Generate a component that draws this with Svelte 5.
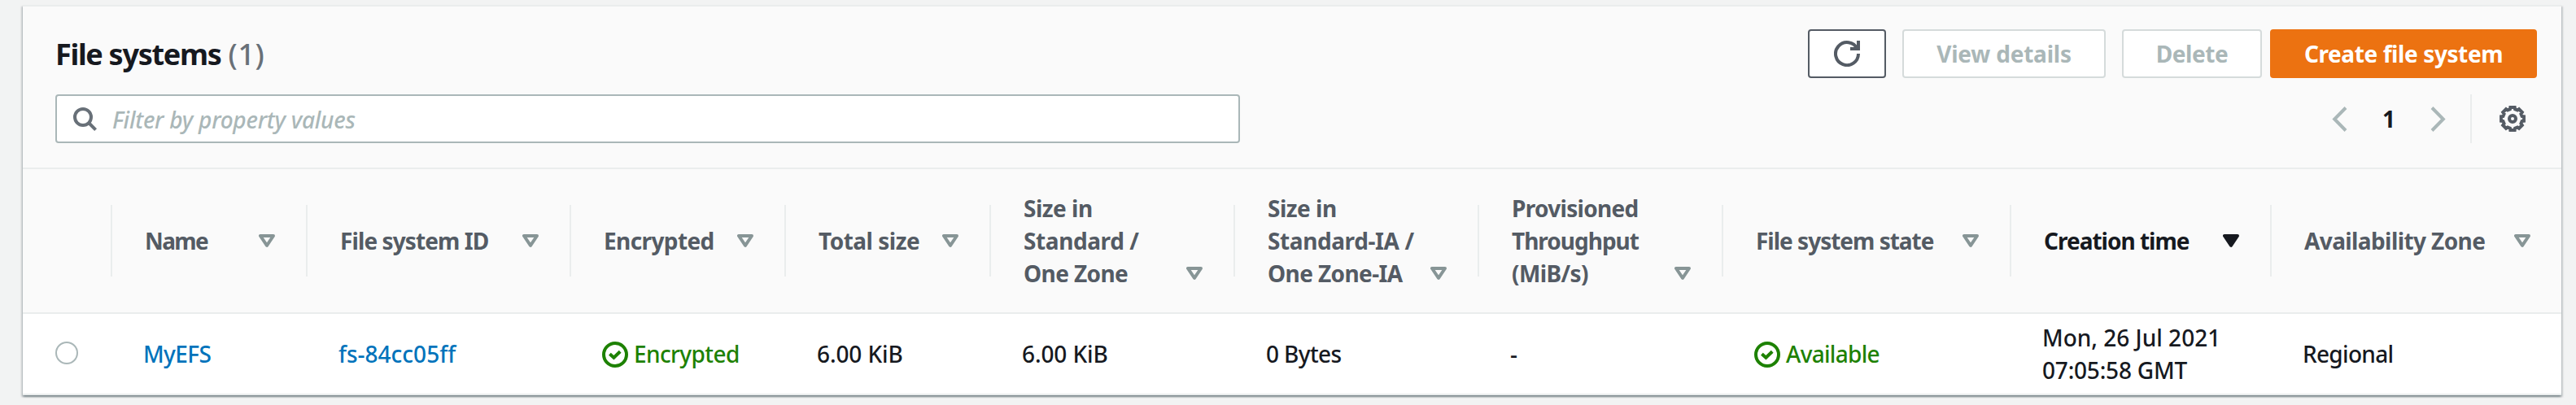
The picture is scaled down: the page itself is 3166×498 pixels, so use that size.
<script>
  const columns = [
    { lines: [['Name', -1.6]] },
    { lines: [['File system ID', -0.9]] },
    { lines: [['Encrypted', -0.6]] },
    { lines: [['Total size', -0.5]] },
    { lines: [['Size in', -0.5], ['Standard /', -0.4], ['One Zone', -0.6]] },
    { lines: [['Size in', -0.5], ['Standard-IA /', -0.4], ['One Zone-IA', -0.6]] },
    { lines: [['Provisioned', -0.7], ['Throughput', -1], ['(MiB/s)', -0.6]] },
    { lines: [['File system state', -1]] },
    { lines: [['Creation time', -1]], sorted: true },
    { lines: [['Availability Zone', -0.6]] }
  ];

  const cells = [
    { kind: 'link', lines: [['MyEFS', -0.6]] },
    { kind: 'link', lines: [['fs-84cc05ff', 0]] },
    { kind: 'status', lines: [['Encrypted', -0.6]] },
    { lines: [['6.00 KiB', -0.1]] },
    { lines: [['6.00 KiB', -0.1]] },
    { lines: [['0 Bytes', -0.6]] },
    { lines: [['-', 0]] },
    { kind: 'status', lines: [['Available', -0.7]] },
    { lines: [['Mon, 26 Jul 2021', 0], ['07:05:58 GMT', -0.2]] },
    { lines: [['Regional', -0.7]] }
  ];

  // Eight-tooth gear outline in a 16-unit box
  const gear = (() => {
    const points = [];
    for (let i = 0; i < 8; i++) {
      const base = i * 45;
      for (const [offset, radius] of [[-11, 7.1], [11, 7.1], [15, 6], [30, 6]]) {
        const a = ((base + offset) * Math.PI) / 180;
        points.push(`${(8 + radius * Math.sin(a)).toFixed(2)} ${(8 - radius * Math.cos(a)).toFixed(2)}`);
      }
    }
    return `M${points.join('L')}Z`;
  })();
</script>

<main>
  <section class="panel">
    <header>
      <div class="title-row">
        <h2>File systems <span>(1)</span></h2>
        <div class="actions">
          <button class="refresh" aria-label="Refresh">
            <svg class="icon" viewBox="0 0 16 16"><path d="M10 5h5V0" /><path d="M15 8a7 7 0 1 1-.7-3" /></svg>
          </button>
          <button class="view" disabled>View details</button>
          <button class="delete" disabled>Delete</button>
          <button class="primary">Create file system</button>
        </div>
      </div>
      <div class="tools">
        <label class="search">
          <svg class="icon" viewBox="0 0 16 16"><circle cx="7" cy="7" r="5" /><path d="M10.5 10.5l4.3 4.3" /></svg>
          <span>Filter by property values</span>
        </label>
        <nav>
          <svg class="chevron" viewBox="0 0 19 31"><path d="M17 1.5 3.2 15.5 17 29.5" /></svg>
          <b>1</b>
          <svg class="chevron" viewBox="0 0 19 31"><path d="M2 1.5 15.8 15.5 2 29.5" /></svg>
          <div class="settings">
            <svg class="icon" viewBox="0 0 16 16"><path d={gear} /><circle cx="8" cy="8" r="2" /></svg>
          </div>
        </nav>
      </div>
    </header>

    <div class="row head">
      <div class="th"></div>
      {#each columns as column}
        <div class="th" class:sorted={column.sorted}>
          <div class="label">
            {#each column.lines as [text, tracking]}
              <span style="letter-spacing: {tracking}px">{text}</span>
            {/each}
          </div>
          <svg class="caret" class:low={column.lines.length > 1} viewBox="0 0 20 16"><path d="M2 2h16l-8 11.8z" /></svg>
        </div>
      {/each}
    </div>

    <div class="row body">
      <div class="select"><i></i></div>
      {#each cells as cell}
        <div class="td {cell.kind ?? ''}">
          {#if cell.kind === 'status'}
            <svg class="icon" viewBox="0 0 16 16"><circle cx="8" cy="8" r="7" /><path d="M4.7 7.6 7.2 9.9 11.1 6.1" /></svg>
          {/if}
          <div class="label">
            {#each cell.lines as [text, tracking]}
              <span style="letter-spacing: {tracking}px">{text}</span>
            {/each}
          </div>
        </div>
      {/each}
    </div>
  </section>
</main>

<style>
  :global(body) {
    background: #f2f3f3;
  }
  main {
    box-sizing: border-box;
    height: 498px;
    padding: 6px 18px 12px 28px;
    background: #f2f3f3;
  }
  .panel {
    box-sizing: border-box;
    height: 480px;
    border-top: 2px solid #eaeded;
    background: #fff;
    box-shadow:
      0 2px 2px rgba(0, 28, 36, 0.3),
      2px 2px 2px rgba(0, 28, 36, 0.15),
      -2px 2px 2px rgba(0, 28, 36, 0.15);
    color: #16191f;
    font: 460 28px/40px 'Noto Sans', sans-serif;
  }
  header {
    box-sizing: border-box;
    height: 200px;
    padding: 28px 30px 0 40px;
    background: #fafafa;
    border-bottom: 2px solid #eaeded;
  }
  .title-row,
  .tools {
    display: flex;
    justify-content: space-between;
    height: 60px;
  }
  .tools {
    margin-top: 20px;
  }
  h2 {
    margin: 0;
    font-size: 36px;
    line-height: 62px;
    letter-spacing: -1.3px;
  }
  h2 span {
    margin-left: 1px;
    color: #687078;
    font-weight: 460;
    letter-spacing: 0.6px;
  }
  .actions {
    display: flex;
  }
  button {
    box-sizing: border-box;
    height: 60px;
    padding: 0;
    border: 2px solid #d5dbdb;
    border-radius: 4px;
    background: #fff;
    color: #aab7b8;
    font: bold 28px/54px 'Noto Sans', sans-serif;
    letter-spacing: -0.2px;
    white-space: nowrap;
  }
  .refresh {
    display: flex;
    align-items: center;
    justify-content: center;
    width: 96px;
    margin-right: 20px;
    border-color: #545b64;
    color: #545b64;
  }
  .view {
    width: 250px;
    margin-right: 20px;
  }
  .delete {
    width: 172px;
    margin-right: 10px;
    letter-spacing: -0.4px;
  }
  .primary {
    width: 328px;
    border-color: #ec7211;
    background: #ec7211;
    color: #fff;
    letter-spacing: -0.4px;
  }
  svg {
    display: block;
    flex: none;
    fill: none;
    stroke: currentColor;
    stroke-width: 2;
  }
  .icon {
    width: 32px;
    height: 32px;
  }
  .search {
    box-sizing: border-box;
    display: flex;
    align-items: center;
    width: 1456px;
    padding-left: 18px;
    border: 2px solid #aab7b8;
    border-radius: 4px;
    background: #fff;
    color: #687078;
  }
  .search span {
    margin-left: 18px;
    padding-top: 2px;
    color: #aab7b8;
    font-style: italic;
    letter-spacing: -0.25px;
  }
  nav {
    display: flex;
    align-items: center;
  }
  nav b {
    width: 102px;
    text-align: center;
  }
  .chevron {
    width: 19px;
    height: 31px;
    stroke-width: 4;
    color: #aab7b8;
  }
  .settings {
    box-sizing: border-box;
    display: flex;
    align-items: center;
    height: 60px;
    width: 82px;
    margin-left: 30px;
    padding-left: 34px;
    border-left: 2px solid #eaeded;
    color: #545b64;
  }
  .row {
    display: grid;
    grid-template-columns: 110px 240px 324px 264px 252px 300px 300px 300px 354px 320px 356px;
  }
  .head {
    height: 176px;
    background: #fafafa;
    border-bottom: 2px solid #eaeded;
  }
  .th {
    display: flex;
    align-items: center;
    justify-content: space-between;
    box-sizing: border-box;
    padding: 0 40px;
    background: linear-gradient(#eaeded, #eaeded) right center / 2px 88px no-repeat;
    color: #545b64;
    font-weight: 700;
  }
  .th:last-child {
    padding-right: 38px;
    background: none;
  }
  .label {
    display: flex;
    flex-direction: column;
    white-space: nowrap;
  }
  .caret {
    width: 20px;
    height: 16px;
    stroke-width: 4;
    stroke-linejoin: round;
    color: #879596;
  }
  .caret.low {
    align-self: flex-end;
    margin-bottom: 40px;
  }
  .sorted,
  .sorted .caret {
    color: #16191f;
  }
  .sorted .caret {
    fill: currentColor;
  }
  .body {
    height: 98px;
    border-bottom: 2px solid #eaeded;
  }
  .select {
    display: flex;
    align-items: center;
    padding: 0 0 2px 40px;
  }
  .select i {
    box-sizing: border-box;
    width: 28px;
    height: 28px;
    border: 2px solid #aab7b8;
    border-radius: 50%;
  }
  .td {
    display: flex;
    align-items: center;
    padding-left: 38px;
  }
  .link {
    color: #0073bb;
  }
  .status {
    gap: 7px;
    color: #1d8102;
  }
  .status .icon {
    margin-top: 2px;
  }
</style>
